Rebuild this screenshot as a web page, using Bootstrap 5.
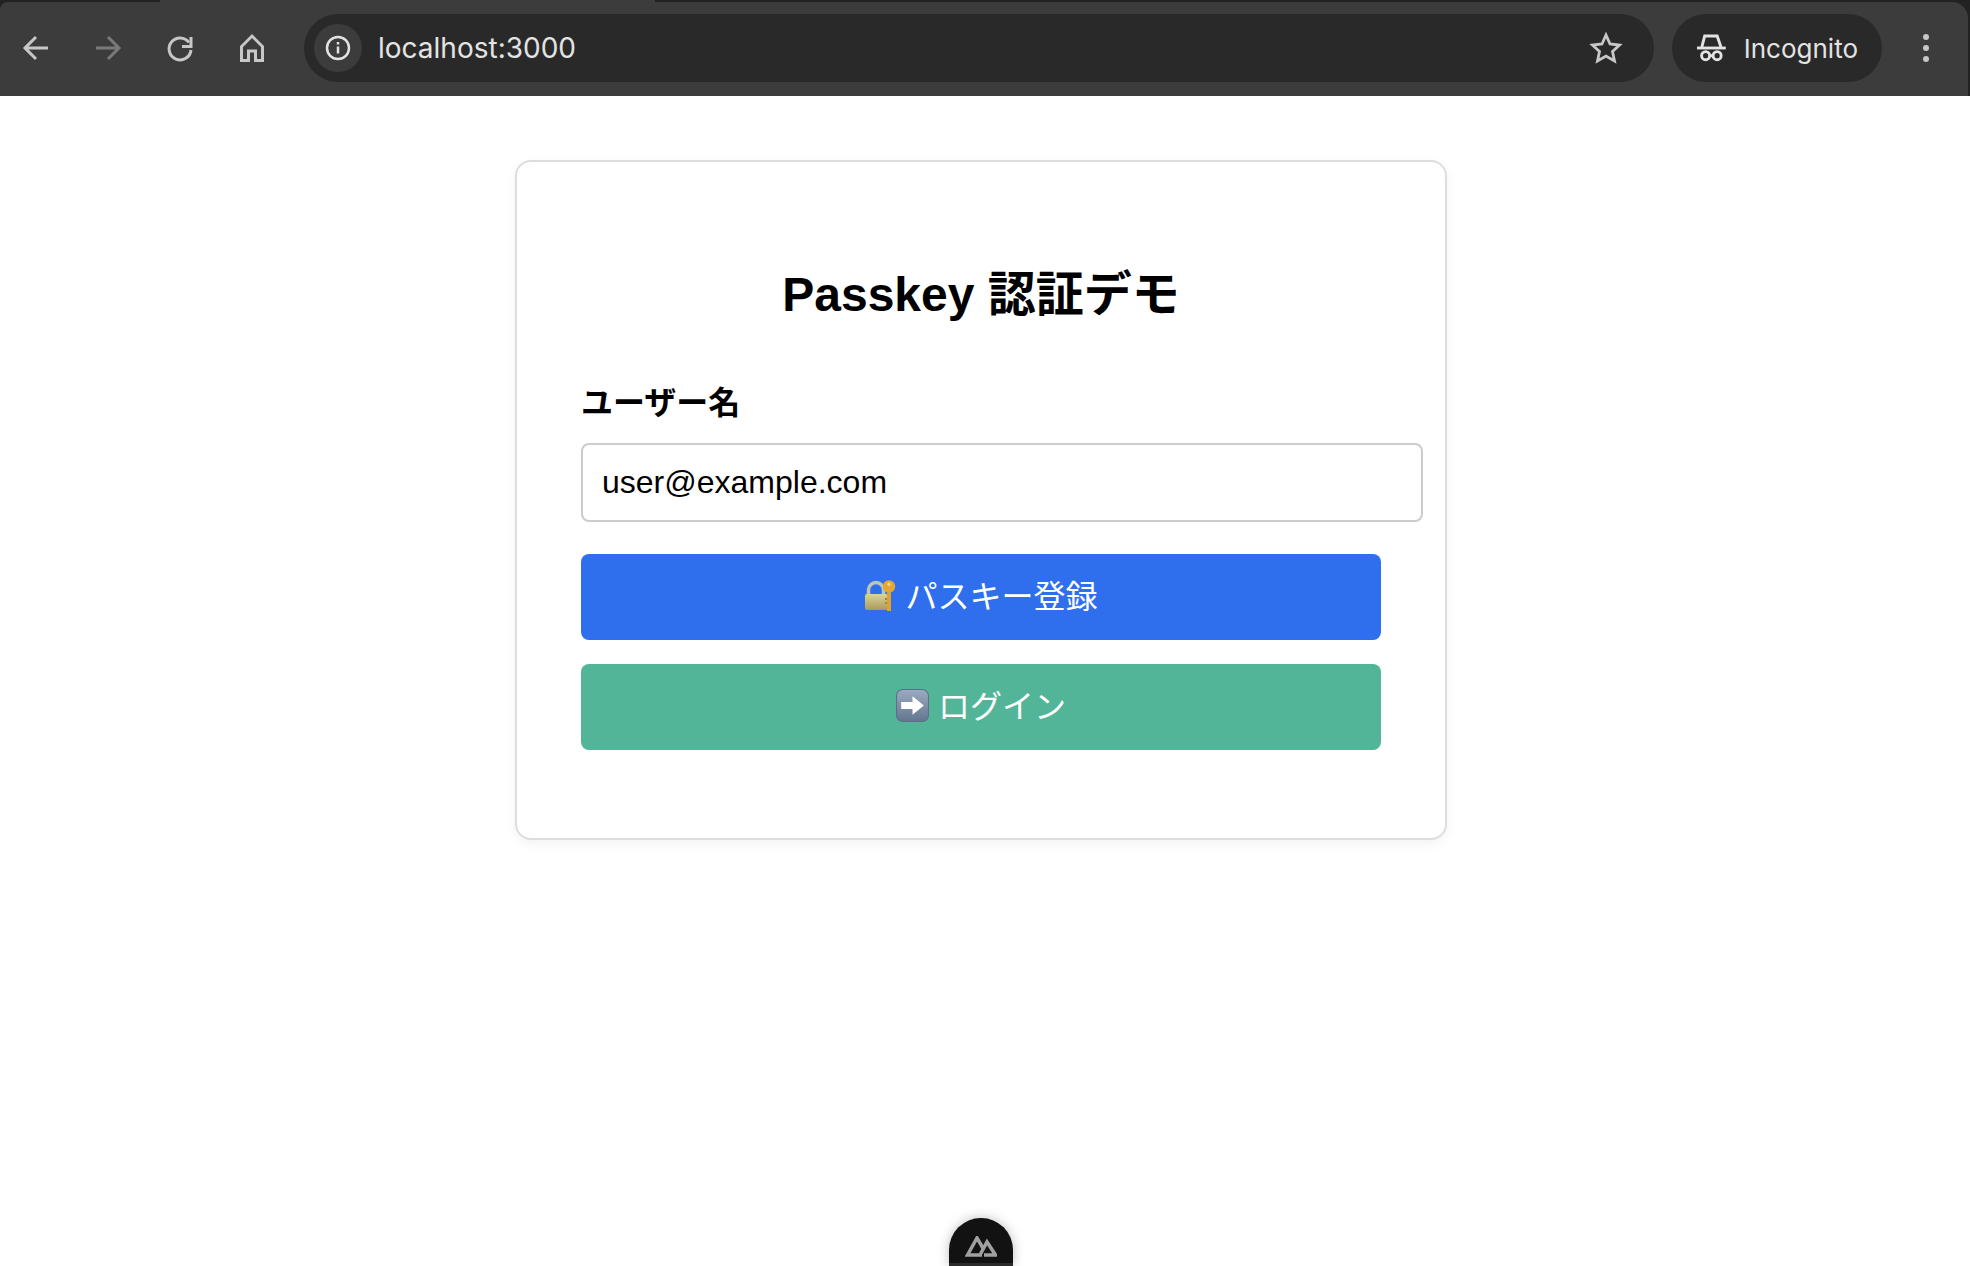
<!DOCTYPE html>
<html lang="ja">
<head>
  <meta charset="UTF-8">
  <title>Passkey 認証デモ</title>
  <link href="https://cdn.jsdelivr.net/npm/bootstrap@5.3.0/dist/css/bootstrap.min.css" rel="stylesheet">
  <style>
    html, body { height: 100%; }
    body {
      background: #fff;
      color: #000;
      font-family: "Liberation Sans", "Noto Sans CJK JP", sans-serif;
      overflow: hidden;
    }
    .chrome-wrap {
      height: 96px;
      padding-top: 2px;
      padding-right: 2px;
      background: linear-gradient(to right, #222 160px, #3c3c3c 160px, #3c3c3c 655px, #222 655px);
    }
    .chrome-bar {
      height: 94px;
      background: #3c3c3c;
      border-radius: 8px 16px 0 0;
      padding: 12px 0 0 16px;
      align-items: flex-start;
    }
    .tool-btn { width: 40px; height: 40px; margin: 14px 32px 0 0; flex: none; }
    .tool-btn svg { display: block; }
    .addr-pill {
      height: 68px;
      background: #292929;
      border-radius: 34px;
      padding: 0 31px 0 10px;
      width: 1350px;
      flex: none;
    }
    .info-dot { width: 48px; height: 48px; border-radius: 50%; background: #3c3c3c; flex: none; }
    .addr-text, .incog-text { font-family: Inter, "Liberation Sans", sans-serif; color: #e3e3e3; }
    .addr-text { margin-left: 16px; font-size: 28px; }
    .incog-pill {
      height: 68px;
      margin-left: 18px;
      background: #292929;
      border-radius: 34px;
      padding: 0 24px 0 25px;
      width: 210px;
      flex: none;
    }
    .incog-text { margin-left: 18px; font-size: 26px; }
    .kebab-wrap { height: 68px; margin-left: 40px; }
    .login-card {
      width: 932px;
      height: 680px;
      margin: 64px 0 0 515px;
      border: 2px solid #ddd;
      border-radius: 16px;
      padding: 0 64px;
      box-shadow: 0 4px 12px rgba(0, 0, 0, .05);
    }
    .login-title { font-size: 48px; font-weight: 700; line-height: 1.2; margin: 0; padding-top: 104px; text-align: center; }
    .login-label { font-size: 32px; font-weight: 700; line-height: 36px; margin: 61px 0 0; display: block; }
    .login-input.form-control {
      width: 842px;
      height: 79px;
      margin-top: 22px;
      font-size: 32px;
      color: #000;
      padding: 0 19px;
      border: 2px solid #ccc;
      border-radius: 8px;
    }
    .action-btn.btn {
      display: block;
      width: 800px;
      height: 86px;
      border: 0;
      border-radius: 8px;
      color: #fff;
      font-size: 32px;
      padding: 0;
    }
    .btn-passkey, .btn-passkey:hover { background: #2f6fed; margin-top: 32px; }
    .btn-login, .btn-login:hover { background: #53b597; margin-top: 24px; }
    .action-btn svg { vertical-align: -4px; margin-right: 9px; }
    .nuxt-tab {
      position: fixed;
      left: 949px;
      bottom: 0;
      width: 64px;
      height: 48px;
      background: #121212;
      border-bottom: 3px solid #2b2b2b;
      border-radius: 32px 32px 0 0;
      box-shadow: 0 0 12px rgba(0, 0, 0, .25);
    }
    .nuxt-tab svg { margin-top: 18px; }
  </style>
</head>
<body>
  <div class="chrome-wrap">
    <div class="chrome-bar d-flex">
      <div class="tool-btn"><svg width="40" height="40" viewBox="0 0 40 40" fill="none" stroke="#c7c7c7" stroke-width="3"><path d="M32 20H10M20 9 9 20l11 11"/></svg></div>
      <div class="tool-btn"><svg width="40" height="40" viewBox="0 0 40 40" fill="none" stroke="#7a7a7a" stroke-width="3"><path d="M8 20h22M20 9l11 11-11 11"/></svg></div>
      <div class="tool-btn"><svg width="40" height="40" viewBox="0 0 40 40" fill="none" stroke="#c7c7c7" stroke-width="3"><path d="M29 14.500A11 11 0 1 0 31 22"/><path d="M31 9v9.500H22"/></svg></div>
      <div class="tool-btn"><svg width="40" height="40" viewBox="0 0 40 40" fill="none" stroke="#c7c7c7" stroke-width="3"><path d="M9.500 32.500V18.500L20 8l10.500 10.500v14h-7V23h-7v9.500z"/></svg></div>
      <div class="addr-pill d-flex align-items-center">
        <div class="info-dot d-flex align-items-center justify-content-center">
          <svg width="28" height="28" viewBox="0 0 28 28" fill="none" stroke="#e3e3e3" stroke-width="2.500"><circle cx="14" cy="14" r="11"/><path d="M14 12.500v7"/><path d="M14 8v2.500"/></svg>
        </div>
        <span class="addr-text flex-grow-1">localhost:3000</span>
        <svg width="34" height="34" viewBox="0 0 34 34" fill="none" stroke="#c7c7c7" stroke-width="2.800"><path d="m17 4 4 9 9.500 1-7 6.500 2 9.500-8.500-5-8.500 5 2-9.500-7-6.500 9.500-1z"/></svg>
      </div>
      <div class="incog-pill d-flex align-items-center">
        <svg width="30" height="28" viewBox="0 0 30 28" fill="none" stroke="#e3e3e3" stroke-width="3"><path d="M0 14h30"/><path d="M5 13 8 1.500h13L25 13"/><circle cx="9" cy="22" r="4.200"/><circle cx="21" cy="22" r="4.200"/><path d="M13 22h4"/></svg>
        <span class="incog-text">Incognito</span>
      </div>
      <div class="kebab-wrap d-flex align-items-center">
        <svg width="8" height="30" viewBox="0 0 8 30" fill="#c7c7c7"><circle cx="4" cy="4" r="3"/><circle cx="4" cy="15" r="3"/><circle cx="4" cy="26" r="3"/></svg>
      </div>
    </div>
  </div>

  <div class="login-card bg-white">
    <h1 class="login-title">Passkey 認証デモ</h1>
    <label class="login-label" for="username">ユーザー名</label>
    <input class="form-control login-input" id="username" type="text" value="user@example.com">
    <button class="btn action-btn btn-passkey" type="button">
      <svg width="32" height="32" viewBox="0 0 32 32">
        <defs><linearGradient id="lockGold" x1="0" y1="0" x2="0" y2="1"><stop offset="0" stop-color="#ddd39a"/><stop offset="1" stop-color="#a89a5a"/></linearGradient></defs>
        <path d="M4.500 15V10a7.500 7.500 0 0 1 15 0v4" fill="none" stroke="#bcc6b4" stroke-width="3.500"/>
        <rect x="1" y="14" width="23" height="16" rx="2" fill="url(#lockGold)"/>
        <path d="M25 10v21" stroke="#dda232" stroke-width="4"/>
        <path d="M21 19h2M21 23h2" stroke="#a8842a" stroke-width="2"/>
        <circle cx="25" cy="6.500" r="6.200" fill="#e3a735"/>
        <circle cx="25" cy="4.200" r="1.700" fill="#f3d68c"/>
      </svg>パスキー登録
    </button>
    <button class="btn action-btn btn-login" type="button">
      <svg width="33" height="33" viewBox="0 0 32 32">
        <defs><linearGradient id="arrowBox" x1="0" y1="0" x2="0" y2="1"><stop offset="0" stop-color="#9aabc2"/><stop offset="1" stop-color="#64768f"/></linearGradient></defs>
        <rect x=".5" y=".5" width="31" height="31" rx="6" fill="url(#arrowBox)" stroke="#5c6e88"/>
        <path d="M5 12.500h11V7l11 9-11 9v-5.500H5z" fill="#fff"/>
      </svg>ログイン
    </button>
  </div>

  <div class="nuxt-tab d-flex align-items-start justify-content-center">
    <svg width="32" height="21" viewBox="0 0 32 21" fill="none" stroke="#a0a0a0" stroke-width="3.500"><path d="M17 19H2.500L12 2l6.500 11"/><path d="M19 19h11.500L22 6l-6.500 12"/></svg>
  </div>

  <script src="https://cdn.jsdelivr.net/npm/bootstrap@5.3.0/dist/js/bootstrap.bundle.min.js"></script>
</body>
</html>
